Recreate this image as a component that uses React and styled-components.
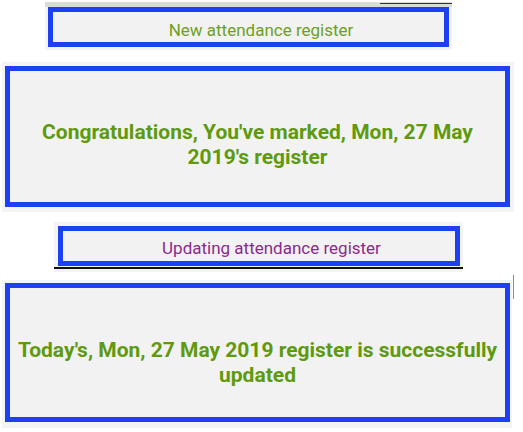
import React from "react";
import styled, { createGlobalStyle } from "styled-components";

const GlobalStyle = createGlobalStyle`
  body {
    margin: 0;
    background: #ffffff;
    font-family: Roboto, "Liberation Sans", sans-serif;
  }
`;

const Page = styled.div`
  display: flex;
  flex-direction: column;
  width: 523px;
  height: 432px;
  padding-top: 2px;
  box-sizing: border-box;
`;

const Frame = styled.div`
  display: flex;
  box-sizing: border-box;
  width: ${({ w }) => w}px;
  height: ${({ h }) => h}px;
  margin-left: ${({ left }) => left}px;
  margin-top: ${({ gap }) => gap}px;
  padding: ${({ pad }) => pad};
  background: #f4f4f4;
  border-top: ${({ strip }) => (strip ? "5px solid #dadada" : "none")};
  position: relative;
`;

const Underline = styled.div`
  position: absolute;
  left: 0;
  right: 0;
  bottom: 3px;
  height: 2px;
  background: #111;
`;

const Panel = styled.div`
  flex: 1;
  display: flex;
  align-items: center;
  justify-content: center;
  border: 5px solid #1d40f2;
  background: #f2f2f2;
  text-align: center;
  padding: 0 2px;
`;

const Label = styled.span`
  font-size: 17px;
  color: ${({ tone }) => tone};
  padding-top: ${({ shift }) => shift || 0}px;
  margin-left: 25px;
`;

const Message = styled.span`
  font-size: 21px;
  font-weight: 700;
  line-height: 25px;
  color: #5f9a0e;
  white-space: nowrap;
  padding-top: ${({ shift }) => shift || 0}px;
`;

const Tick = styled.div`
  position: absolute;
  top: -4px;
  right: 0;
  width: 72px;
  height: 1px;
  background: #333;
`;

const SideLine = styled.div`
  position: absolute;
  top: -5px;
  right: -2px;
  width: 1px;
  height: 24px;
  background: #6c8cf5;
`;

const App = () => {
  return (
    <>
      <GlobalStyle />
      <Page>
        <Frame w={407} h={48} left={45} gap={0} pad="0 3px 3px 3px" strip>
          <Tick />
          <Panel>
            <Label tone="#6f9f22" shift={6}>
              New attendance register
            </Label>
          </Panel>
        </Frame>

        <Frame w={512} h={150} left={2} gap={12} pad="4px 4px 5px 3px">
          <Panel>
            <Message shift={17}>
              Congratulations, You've marked, Mon, 27 May
              <br />
              2019's register
            </Message>
          </Panel>
        </Frame>

        <Frame w={409} h={50} left={54} gap={10} pad="4px 3px 6px 4px">
          <Panel>
            <Label tone="#8a2a8c" shift={3}>
              Updating attendance register
            </Label>
          </Panel>
          <Underline />
        </Frame>

        <Frame w={510} h={148} left={2} gap={8} pad="3px 2px 6px 3px">
          <SideLine />
          <Panel>
            <Message shift={20}>
              Today's, Mon, 27 May 2019 register is successfully
              <br />
              updated
            </Message>
          </Panel>
        </Frame>
      </Page>
    </>
  );
};

export default App;
